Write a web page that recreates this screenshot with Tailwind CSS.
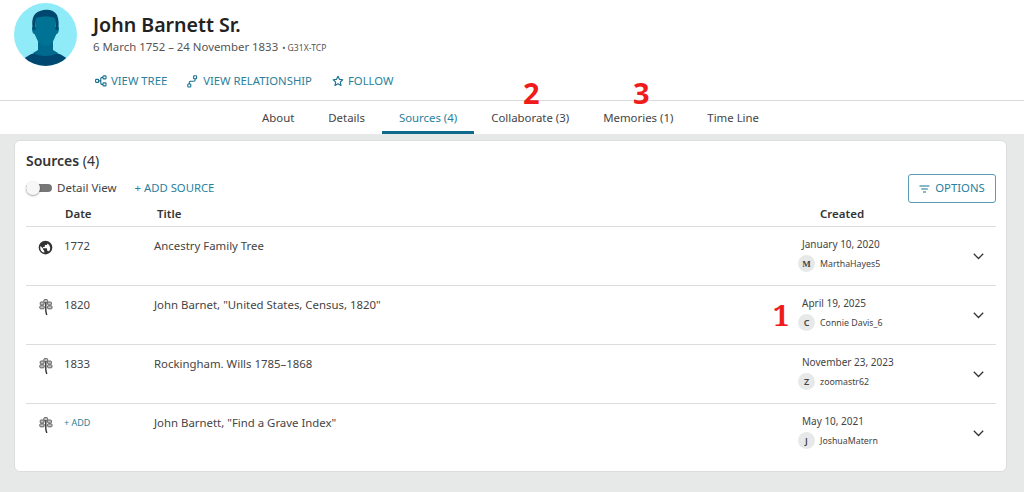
<!DOCTYPE html>
<html lang="en">
<head>
  <meta charset="UTF-8" />
  <title>John Barnett Sr. | Sources</title>
  <script src="https://cdn.jsdelivr.net/npm/@tailwindcss/browser@4"></script>
</head>
<body class="relative h-[492px] w-[1024px] overflow-hidden bg-[#e7e9e8] font-['Noto_Sans',sans-serif] text-[#333]">
  <!-- Person header -->
  <header class="h-[101px] bg-white border-b border-[#d9dbda] flex pl-[14px] pt-[3px]">
    <svg class="w-[63px] h-[63px] shrink-0" viewBox="0 0 63 63">
      <defs><clipPath id="avatarClip"><circle cx="31.5" cy="31.5" r="31.5"/></clipPath></defs>
      <circle cx="31.5" cy="31.5" r="31.5" fill="#8eebf7"/>
      <g clip-path="url(#avatarClip)">
        <path d="M6 63 C8 55 14 52 23 49 L40 49 C49 52 55 55 57 63 Z" fill="#00486f"/>
        <path d="M24 36 L24 47 L19 50 C26 54 37 54 44 50 L39 47 L39 36 Z" fill="#006a8e"/>
        <path d="M18.500 24 C17.500 24 18 31 20.500 31 L22 34 C24 40 28 43 31.500 43 C35 43 39 40 41 34 L42.500 31 C45 31 45.500 24 44.500 24 Z" fill="#007293"/>
        <path d="M22 12 L41 12 L41 30 L22 30 Z" fill="#007293"/>
        <path d="M19 27 C17 17 19 10 26 8 C33 5.500 40 7 43 12 C45 17 45 22 44 27 L41.500 27 L41 15 C35 13 28 13 22 15 L21.500 27 Z" fill="#00486f"/>
      </g>
    </svg>
    <div class="ml-[16px]">
      <h1 class="text-[19.6px] leading-[27px] font-semibold text-[#222] mt-[8px]">John Barnett Sr.</h1>
      <p class="text-[11.4px] leading-[16px] text-[#555] mt-[1px]">6 March 1752 – 24 November 1833 <span class="text-[8.6px] ml-[1px]">• G31X-TCP</span></p>
      <nav class="flex items-center mt-[17px] ml-[2px] text-[11.3px] leading-[16px] text-[#2b7f9c]">
        <a class="flex items-center gap-[4px]" href="#">
          <svg class="w-[12px] h-[12px]" viewBox="0 0 12 12" fill="none" stroke="#16708f" stroke-width="1.1"><rect x="0.6" y="4.4" width="3" height="3" rx="0.7"/><rect x="8" y="0.9" width="3" height="3" rx="0.7"/><rect x="8" y="7.9" width="3" height="3" rx="0.7"/><path d="M3.6 5.9H5.8M8 2.4H7a1.2 1.2 0 0 0-1.2 1.2V8.2A1.2 1.2 0 0 0 7 9.4H8"/></svg>
          VIEW TREE
        </a>
        <a class="flex items-center gap-[5px] ml-[20px]" href="#">
          <svg class="w-[11px] h-[13px]" viewBox="0 0 11 13" fill="none" stroke="#16708f" stroke-width="1.1"><rect x="0.8" y="9" width="3" height="3" rx="0.7"/><rect x="6.6" y="0.8" width="3" height="3" rx="0.7"/><path d="M2.3 9V7.5A1.2 1.2 0 0 1 3.5 6.3H6.9A1.2 1.2 0 0 0 8.1 5.1V3.8"/></svg>
          VIEW RELATIONSHIP
        </a>
        <a class="flex items-center gap-[4px] ml-[20px]" href="#">
          <svg class="w-[12px] h-[12px]" viewBox="0 0 24 24" fill="none" stroke="#16708f" stroke-width="2.2" stroke-linejoin="round"><path d="M12 2.5l2.9 6.2 6.7.8-5 4.6 1.4 6.7L12 17.4l-6 3.4 1.4-6.7-5-4.6 6.7-.8z"/></svg>
          FOLLOW
        </a>
      </nav>
    </div>
  </header>

  <!-- Tabs -->
  <div class="h-[33px] bg-white flex justify-center pr-[3px] text-[11.4px] text-[#444]">
    <a class="px-[17px] pt-[9px] leading-[16px]" href="#">About</a>
    <a class="px-[17px] pt-[9px] leading-[16px]" href="#">Details</a>
    <a class="px-[17px] pt-[9px] leading-[16px] text-[#2b7f9c] border-b-[3px] border-[#0f6a8b]" href="#">Sources (4)</a>
    <a class="px-[17px] pt-[9px] leading-[16px]" href="#">Collaborate (3)</a>
    <a class="px-[17px] pt-[9px] leading-[16px]" href="#">Memories (1)</a>
    <a class="px-[17px] pt-[9px] leading-[16px]" href="#">Time Line</a>
  </div>

  <!-- Sources card -->
  <main class="ml-[14px] mt-[6px] w-[993px] h-[332px] bg-white rounded-[6px] border border-[#dcdedd] pl-[11px] pr-[10px]">
    <h2 class="text-[14px] leading-[20px] font-semibold text-[#333] mt-[10px]">Sources <span class="font-normal">(4)</span></h2>
    <div class="flex items-start h-[31px]">
      <div class="flex items-center mt-[9px] text-[11.5px] leading-[16px] text-[#444]">
        <span class="relative w-[26px] h-[8px] rounded-full bg-[#777] block">
          <span class="absolute left-0 top-[-3px] w-[14px] h-[14px] rounded-full bg-[#f7f7f7] shadow-[0_1px_2px_rgba(0,0,0,.35)]"></span>
        </span>
        <span class="ml-[5px]">Detail View</span>
        <a class="ml-[18px] text-[11.3px] text-[#2b7f9c]" href="#">+ ADD SOURCE</a>
      </div>
      <button class="ml-auto mt-[3px] w-[88px] h-[29px] rounded-[3px] border border-[#5b9db3] flex items-center justify-center gap-[5px] text-[11.3px] text-[#2b7f9c]">
        <svg class="w-[11px] h-[8px]" viewBox="0 0 11 8" fill="none" stroke="#16708f" stroke-width="1.1"><path d="M0.5 1H10.5M2.2 4H8.8M4 7H7"/></svg>
        OPTIONS
      </button>
    </div>
    <div class="flex h-[25px] border-b border-[#dcdedd] text-[11.5px] leading-[16px] font-semibold text-[#333] pt-[4px]">
      <span class="ml-[39px] w-[92px]">Date</span>
      <span class="w-[660px]">Title</span>
      <span class="ml-[3px]">Created</span>
    </div>

    <div class="flex h-[59px] border-b border-[#dcdedd] text-[11.4px] leading-[16px] text-[#444]">
      <svg class="w-[15px] h-[15px] ml-[12px] mt-[13px] shrink-0" viewBox="0 0 24 24" fill="#333"><path d="M12 1a11 11 0 1 0 0 22 11 11 0 0 0 0-22zM3.6 12c0-.9.1-1.700.4-2.500L6 11.500l2 2v1.500l2 2v3.400A8.400 8.400 0 0 1 3.600 12zm13.800 6.500c-.2-.8-1-1.500-1.900-1.500h-1v-3c0-.6-.4-1-1-1H8v-2h2c.6 0 1-.4 1-1V8h2c1.100 0 2-.9 2-2v-.4a8.400 8.400 0 0 1 2.400 12.900z"/></svg>
      <span class="w-[90px] ml-[11px] mt-[11px]">1772</span>
      <span class="w-[648px] mt-[11px]">Ancestry Family Tree</span>
      <div class="w-[172px] mt-[10px] text-[10px] leading-[14px]">
        <div>January 10, 2020</div>
        <div class="flex items-center mt-[4px] text-[8.8px] -ml-[4px]"><span class="w-[17px] h-[17px] rounded-full bg-[#e7e9e8] flex items-center justify-center mr-[5px] text-[9px] font-semibold font-['Liberation_Serif',serif]">M</span>MarthaHayes5</div>
      </div>
      <svg class="w-[11px] h-[7px] mt-[26px] -ml-[1px]" viewBox="0 0 11 7" fill="none" stroke="#333" stroke-width="1.300"><path d="M0.800 0.800L5.500 5.500L10.200 0.800"/></svg>
    </div>

    <div class="flex h-[59px] border-b border-[#dcdedd] text-[11.4px] leading-[16px] text-[#444]">
      <svg class="w-[14px] h-[16px] ml-[13px] mt-[13px] shrink-0" viewBox="0 0 14 16" fill="#c4c4c4" stroke="#555" stroke-width="0.900"><path d="M6.800 3V11.500C6.800 13 7.300 14.500 7.800 16" fill="none" stroke="#333" stroke-width="1.400"/><rect x="4.800" y="0.600" width="3.800" height="3" rx="0.800"/><rect x="1.200" y="3" width="3.800" height="3" rx="0.800"/><rect x="8.600" y="3" width="3.800" height="3" rx="0.800"/><rect x="0.800" y="6.800" width="4.400" height="3" rx="0.800"/><rect x="8.600" y="6.800" width="4.400" height="3" rx="0.800"/></svg>
      <span class="w-[90px] ml-[11px] mt-[11px]">1820</span>
      <span class="w-[648px] mt-[11px]">John Barnet, "United States, Census, 1820"</span>
      <div class="w-[172px] mt-[10px] text-[10px] leading-[14px]">
        <div>April 19, 2025</div>
        <div class="flex items-center mt-[4px] text-[8.8px] -ml-[4px]"><span class="w-[17px] h-[17px] rounded-full bg-[#e7e9e8] flex items-center justify-center mr-[5px] text-[9px] font-semibold">C</span>Connie Davis_6</div>
      </div>
      <svg class="w-[11px] h-[7px] mt-[26px] -ml-[1px]" viewBox="0 0 11 7" fill="none" stroke="#333" stroke-width="1.300"><path d="M0.800 0.800L5.500 5.500L10.200 0.800"/></svg>
    </div>

    <div class="flex h-[59px] border-b border-[#dcdedd] text-[11.4px] leading-[16px] text-[#444]">
      <svg class="w-[14px] h-[16px] ml-[13px] mt-[13px] shrink-0" viewBox="0 0 14 16" fill="#c4c4c4" stroke="#555" stroke-width="0.900"><path d="M6.800 3V11.500C6.800 13 7.300 14.500 7.800 16" fill="none" stroke="#333" stroke-width="1.400"/><rect x="4.800" y="0.600" width="3.800" height="3" rx="0.800"/><rect x="1.200" y="3" width="3.800" height="3" rx="0.800"/><rect x="8.600" y="3" width="3.800" height="3" rx="0.800"/><rect x="0.800" y="6.800" width="4.400" height="3" rx="0.800"/><rect x="8.600" y="6.800" width="4.400" height="3" rx="0.800"/></svg>
      <span class="w-[90px] ml-[11px] mt-[11px]">1833</span>
      <span class="w-[648px] mt-[11px]">Rockingham. Wills 1785–1868</span>
      <div class="w-[172px] mt-[10px] text-[10px] leading-[14px]">
        <div>November 23, 2023</div>
        <div class="flex items-center mt-[4px] text-[8.8px] -ml-[4px]"><span class="w-[17px] h-[17px] rounded-full bg-[#e7e9e8] flex items-center justify-center mr-[5px] text-[9px] font-semibold">Z</span>zoomastr62</div>
      </div>
      <svg class="w-[11px] h-[7px] mt-[26px] -ml-[1px]" viewBox="0 0 11 7" fill="none" stroke="#333" stroke-width="1.300"><path d="M0.800 0.800L5.500 5.500L10.200 0.800"/></svg>
    </div>

    <div class="flex h-[59px] text-[11.4px] leading-[16px] text-[#444]">
      <svg class="w-[14px] h-[16px] ml-[13px] mt-[13px] shrink-0" viewBox="0 0 14 16" fill="#c4c4c4" stroke="#555" stroke-width="0.900"><path d="M6.800 3V11.500C6.800 13 7.300 14.500 7.800 16" fill="none" stroke="#333" stroke-width="1.400"/><rect x="4.800" y="0.600" width="3.800" height="3" rx="0.800"/><rect x="1.200" y="3" width="3.800" height="3" rx="0.800"/><rect x="8.600" y="3" width="3.800" height="3" rx="0.800"/><rect x="0.800" y="6.800" width="4.400" height="3" rx="0.800"/><rect x="8.600" y="6.800" width="4.400" height="3" rx="0.800"/></svg>
      <a class="w-[90px] ml-[11px] mt-[11px] text-[9px] text-[#2b7f9c]" href="#">+ ADD</a>
      <span class="w-[648px] mt-[11px]">John Barnett, "Find a Grave Index"</span>
      <div class="w-[172px] mt-[10px] text-[10px] leading-[14px]">
        <div>May 10, 2021</div>
        <div class="flex items-center mt-[4px] text-[8.8px] -ml-[4px]"><span class="w-[17px] h-[17px] rounded-full bg-[#e7e9e8] flex items-center justify-center mr-[5px] text-[9px] font-semibold">J</span>JoshuaMatern</div>
      </div>
      <svg class="w-[11px] h-[7px] mt-[26px] -ml-[1px]" viewBox="0 0 11 7" fill="none" stroke="#333" stroke-width="1.300"><path d="M0.800 0.800L5.500 5.500L10.200 0.800"/></svg>
    </div>
  </main>

  <!-- Red annotation numbers -->
  <span class="absolute left-[523px] top-[73px] text-[29px] leading-[40px] font-bold text-[#f01c1c]">2</span>
  <span class="absolute left-[633px] top-[73px] text-[29px] leading-[40px] font-bold text-[#f01c1c]">3</span>
  <span class="absolute left-[773px] top-[295px] text-[29px] leading-[40px] font-bold text-[#f01c1c] font-['Noto_Serif','DejaVu_Serif',serif]">1</span>
</body>
</html>
